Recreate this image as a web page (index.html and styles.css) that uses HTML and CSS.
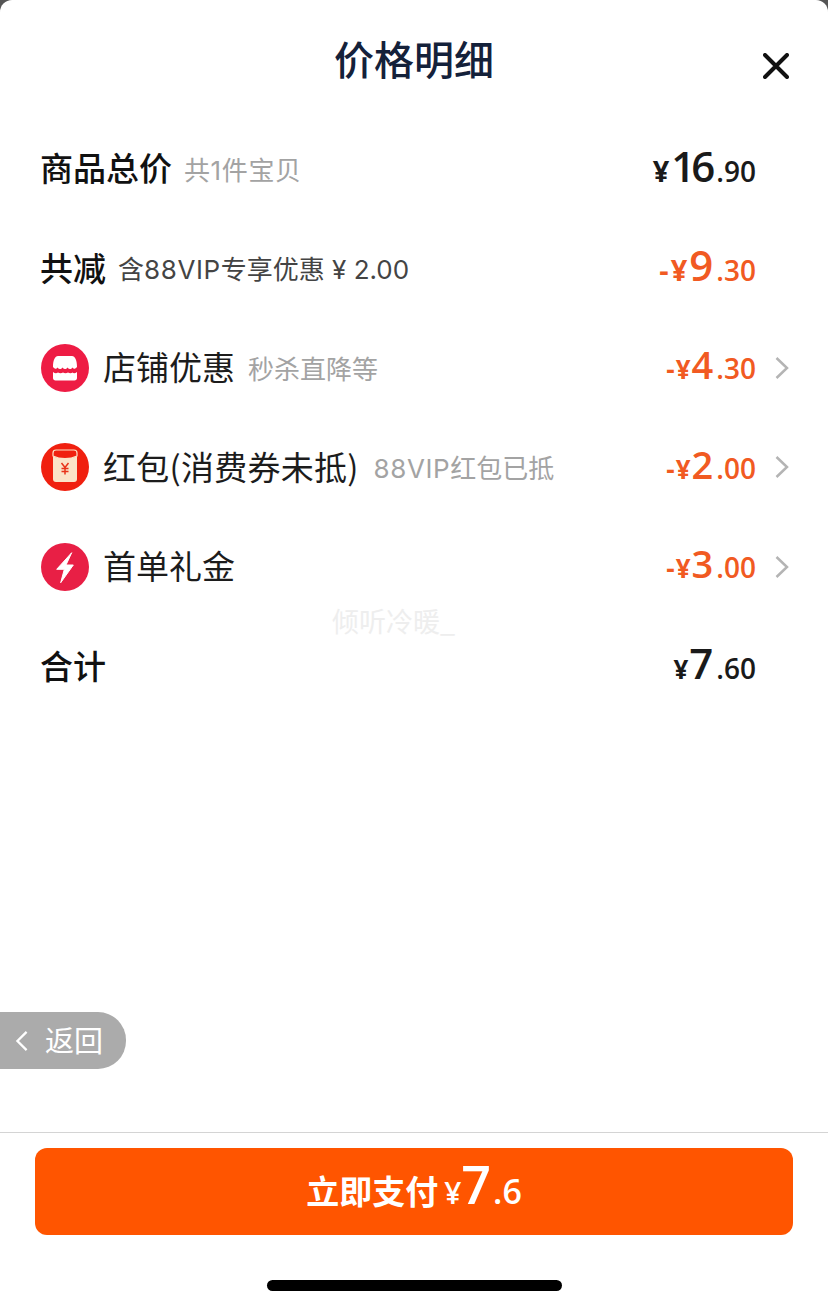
FILE: index.html
```html
<!DOCTYPE html>
<html lang="zh-CN">
<head>
  <meta charset="UTF-8">
  <title>价格明细</title>
  <link rel="stylesheet" href="styles.css">
</head>
<body>
  <div class="sheet">
    <div class="head">
      <h2 class="title">价格明细</h2>
      <svg class="close" viewBox="0 0 26 26"><path d="M2 2L24 24M24 2L2 24"/></svg>
    </div>

    <div class="list">
      <div class="row">
        <span class="label bold">商品总价</span>
        <span class="sub lat">共1件宝贝</span>
        <span class="price big"><i>¥</i><b class="tight">16</b><em>.90</em></span>
      </div>
      <div class="row">
        <span class="label bold">共减</span>
        <span class="sub dark">含<span class="lat">88VIP</span>专享优惠 ¥ 2.00</span>
        <span class="price red big"><i>-¥</i><b>9</b><em>.30</em></span>
      </div>
      <div class="row">
        <svg class="ico" viewBox="0 0 48 48">
          <circle cx="24" cy="24" r="24" fill="#ee1c44"/>
          <path d="M17 12h14c3 0 5 4 5 11c-2 2.500-3.500 2-4.500 .5c-1.500 2-3.500 2-5 0c-1.500 2-3.500 2-5 0c-1.500 2-3.500 2-5 0c-1 1.500-2.500 2-4.500-.5c0-7 2-11 5-11z" fill="#fff"/>
          <path d="M12 28c2 1.500 3.500 1.500 5 .5c1.500 1 3.500 1 5 0c1.500 1 3.500 1 5 0c1.500 1 3.500 1 4.500 0c1 1 2.500 1 4.500-.5v6c0 1.500-1 2.500-2.500 2.500h-19c-1.500 0-2.500-1-2.500-2.500z" fill="#fff"/>
        </svg>
        <span class="label">店铺优惠</span>
        <span class="sub">秒杀直降等</span>
        <span class="price red small"><i>-¥</i><b>4</b><em>.30</em></span>
        <svg class="arrow" viewBox="0 0 14 24"><path d="M1.500 2L12 12L1.500 22"/></svg>
      </div>
      <div class="row">
        <svg class="ico" viewBox="0 0 48 48">
          <circle cx="24" cy="24" r="24" fill="#f0200f"/>
          <rect x="12" y="7" width="24" height="32" rx="3" fill="#fbe3c8"/>
          <path d="M12 10c0-2 1-3 3-3h18c2 0 3 1 3 3v3c-7 3.500-17 3.500-24 0z" fill="#f0200f" stroke="#fbe3c8" stroke-width="1.200"/>
          <path d="M20.500 20l3.500 4.500l3.500-4.500M24 24.500v7M20.500 25.500h7M20.500 28.500h7" fill="none" stroke="#e8331a" stroke-width="1.500"/>
        </svg>
        <span class="label wide">红包(消费券未抵)</span>
        <span class="sub"><span class="lat">88VIP</span>红包已抵</span>
        <span class="price red small"><i>-¥</i><b>2</b><em>.00</em></span>
        <svg class="arrow" viewBox="0 0 14 24"><path d="M1.500 2L12 12L1.500 22"/></svg>
      </div>
      <div class="row">
        <svg class="ico" viewBox="0 0 48 48">
          <circle cx="24" cy="24" r="24" fill="#e81f45"/>
          <path d="M30.700 9.700L15.700 26.300h7.600L19.700 39.700L32.300 22H25z" fill="#fff" stroke="#fff" stroke-width="1" stroke-linejoin="round"/>
        </svg>
        <span class="label">首单礼金</span>
        <span class="price red small"><i>-¥</i><b>3</b><em>.00</em></span>
        <svg class="arrow" viewBox="0 0 14 24"><path d="M1.500 2L12 12L1.500 22"/></svg>
      </div>
      <div class="row">
        <span class="label bold">合计</span>
        <span class="price"><i>¥</i><b>7</b><em>.60</em></span>
      </div>
    </div>

    <div class="watermark">倾听冷暖_</div>

    <div class="back">
      <svg class="back-arrow" viewBox="0 0 14 24"><path d="M12 2L2 12L12 22"/></svg>
      <span class="back-text">返回</span>
    </div>

    <div class="foot">
      <button class="pay"><span class="pay-text">立即支付</span><i>¥</i><b>7</b><em>.6</em></button>
      <div class="home-bar"></div>
    </div>
  </div>
</body>
</html>
```

FILE: styles.css
```css
* {
  box-sizing: border-box;
}
body {
  margin: 0;
  background: #555;
  font-family: "Noto Sans CJK SC", "Noto Sans", sans-serif;
}
.sheet {
  position: relative;
  display: flex;
  flex-direction: column;
  width: 828px;
  height: 1307px;
  overflow: hidden;
  background: #fff;
  border-radius: 12px 12px 0 0;
}

.head {
  position: relative;
  height: 119px;
  padding-top: 29px;
  flex: none;
}
.title {
  margin: 0;
  font-size: 40px;
  line-height: 58px;
  font-weight: 500;
  text-align: center;
  color: #14213a;
}
.close {
  position: absolute;
  top: 53px;
  right: 39px;
  width: 26px;
  height: 26px;
  fill: none;
  stroke: #111;
  stroke-width: 4;
  stroke-linecap: round;
}

.list {
  flex: 1;
}
.row {
  display: flex;
  align-items: center;
  height: 99.5px;
  padding: 0 39px 0 41px;
}
.row:last-child {
  padding-right: 72px;
}
.row:nth-child(-n+2) {
  padding-right: 72px;
}
.label {
  padding-bottom: 3px;
  font-size: 33px;
  color: #1c1c1c;
}
.bold {
  margin-left: -1px;
  font-weight: 500;
  color: #111;
}
.bold + .sub {
  margin-left: 12px;
}
.wide {
  letter-spacing: .25px;
}
.wide + .sub {
  margin-left: 15px;
}
.sub {
  margin-left: 13px;
  padding-bottom: 1px;
  font-family: "Inter", "Noto Sans CJK SC", sans-serif;
  font-size: 26px;
  color: #a3a3a3;
}
.lat {
  letter-spacing: .6px;
}
.dark {
  color: #444;
}
.ico {
  width: 48px;
  height: 48px;
  margin-right: 14px;
  flex: none;
}
.price {
  margin-left: auto;
  padding-bottom: 7px;
  font-family: "Open Sans", "Liberation Sans", sans-serif;
  font-weight: 700;
  color: #1a1a1a;
  white-space: nowrap;
}
.price i {
  font-style: normal;
  font-size: 26px;
  letter-spacing: 1px;
}
.price.big i {
  font-size: 29px;
  letter-spacing: 2px;
}
.price b {
  font-size: 42px;
  font-weight: 600;
  letter-spacing: -2px;
}
.price .tight {
  letter-spacing: -4px;
}
.price em {
  margin-left: 5px;
  font-style: normal;
  font-size: 28px;
  font-weight: 600;
}
.price.small b {
  font-size: 38px;
}
.red {
  color: #f15a22;
}
.arrow {
  width: 14px;
  height: 24px;
  margin-left: 19px;
  flex: none;
  fill: none;
  stroke: #b4b4b4;
  stroke-width: 2.500;
}

.watermark {
  position: absolute;
  top: 603px;
  left: 332px;
  font-size: 27px;
  line-height: 36px;
  color: #eeeeee;
}

.back {
  position: absolute;
  top: 1012px;
  left: 0;
  display: flex;
  align-items: center;
  width: 126px;
  height: 57px;
  padding-left: 15px;
  background: #ababab;
  border-radius: 0 28px 28px 0;
  color: #fff;
  font-size: 29px;
}
.back-arrow {
  width: 14px;
  height: 22px;
  margin-right: 16px;
  fill: none;
  stroke: #fff;
  stroke-width: 2.500;
}
.back-text {
  padding-bottom: 3px;
}

.foot {
  flex: none;
  height: 175px;
  padding: 15px 35px 0 35px;
  border-top: 1px solid #d4d4d4;
}
.pay {
  display: flex;
  align-items: baseline;
  justify-content: center;
  width: 758px;
  height: 87px;
  padding: 0 0 10px;
  border: none;
  border-radius: 12px;
  background: #ff5500;
  color: #fff;
  font-family: inherit;
  font-size: 33px;
  font-weight: 700;
}
.pay i,
.pay b,
.pay em {
  font-style: normal;
  font-family: "Open Sans", "Liberation Sans", sans-serif;
  font-weight: 600;
}
.pay i {
  margin-left: 6px;
  font-size: 30px;
}
.pay b {
  font-size: 52px;
  letter-spacing: -3px;
}
.pay em {
  margin-left: 5px;
  font-size: 34px;
}
.home-bar {
  width: 295px;
  height: 11px;
  margin: 45px auto 0;
  border-radius: 6px;
  background: #000;
}
```
